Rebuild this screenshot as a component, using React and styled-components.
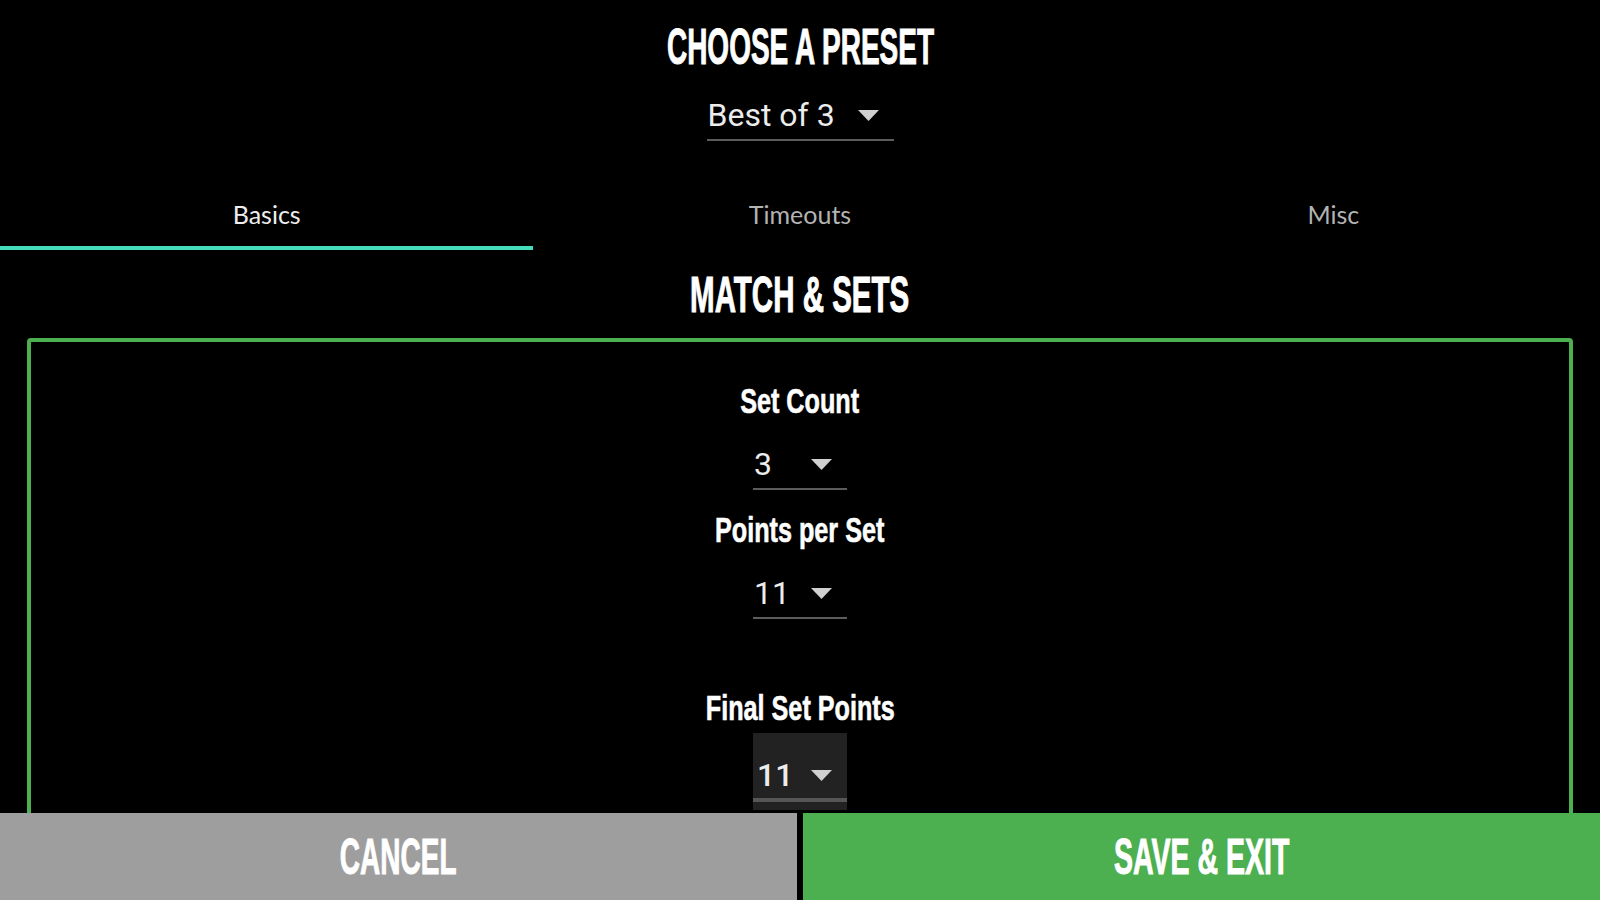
import React, { useState } from "react";
import styled, { createGlobalStyle } from "styled-components";

const GlobalStyle = createGlobalStyle`
  html, body {
    margin: 0;
    padding: 0;
    background: #000;
    overflow: hidden;
  }
  body {
    font-family: Roboto, "Liberation Sans", sans-serif;
    color: #fff;
  }
`;

const Page = styled.div`
  min-height: 100vh;
  box-sizing: border-box;
  padding-top: 22px;
  display: flex;
  flex-direction: column;
`;

// the app's display face is a narrow poster font, squeeze a bold sans to get there
const Squeeze = styled.span`
  display: inline-block;
  white-space: nowrap;
  transform: scaleX(${(p) => p.$x});
`;

const Heading = styled.h1`
  margin: ${(p) => p.$top || 0}px 0 0;
  font: 700 50px/50px "Liberation Sans", Arial, sans-serif;
  text-align: center;
  color: #fff;
  -webkit-text-stroke: 1px #fff;
`;

const Centered = styled.div`
  display: flex;
  justify-content: center;
  margin-top: ${(p) => p.$top || 0}px;
`;

const SelectBox = styled.div`
  display: flex;
  align-items: center;
  justify-content: space-between;
  box-sizing: border-box;
  width: ${(p) => p.$width}px;
  margin-top: ${(p) => (p.$filled ? "-15px" : "0")};
  padding: ${(p) => (p.$filled ? "23px 0 16px 4px" : "4px 0 5px 1px")};
  font: ${(p) => (p.$filled ? 500 : 400)} 32px/38px Roboto, sans-serif;
  color: #ececec;
  cursor: pointer;
  background: ${(p) =>
    p.$filled
      ? "linear-gradient(#555, #555) 0 calc(100% - 8px) / 100% 4px no-repeat, #222"
      : "none"};
  border-bottom: ${(p) => (p.$filled ? "none" : "2px solid #5c5c5c")};
`;

const Caret = styled.svg`
  width: 21px;
  height: 11px;
  margin-right: 15px;
  flex-shrink: 0;
`;

const Tabs = styled.div`
  display: grid;
  grid-template-columns: repeat(3, 1fr);
  margin-top: 37px;
`;

const Tab = styled.button`
  height: 72px;
  box-sizing: border-box;
  padding: 4px 0 0;
  border: none;
  border-bottom: 4px solid ${(p) => (p.$active ? "#45dcbc" : "transparent")};
  background: none;
  font: 400 25px Lato, "Open Sans", sans-serif;
  color: ${(p) => (p.$active ? "#eeeeee" : "#b3b3b3")};
  cursor: pointer;
`;

const Panel = styled.div`
  margin: 18px 27px 0;
  border: 4px solid #4caf50;
  border-radius: 4px;
  padding: 39px 0 140px;
  display: flex;
  flex-direction: column;
  align-items: center;
`;

const Field = styled.div`
  display: flex;
  flex-direction: column;
  align-items: center;
  gap: 20px;
  margin-top: ${(p) => p.$top || 0}px;
`;

const Label = styled.div`
  font: 700 35px/40px "Liberation Sans", Arial, sans-serif;
  color: #fff;
  -webkit-text-stroke: 0.6px #fff;
  text-align: center;
`;

const Footer = styled.div`
  position: fixed;
  left: 0;
  right: 0;
  bottom: 0;
  height: 87px;
  display: grid;
  grid-template-columns: 1fr 1fr;
  gap: 6px;
  background: #000;
`;

const ActionButton = styled.button`
  border: none;
  background: ${(p) => p.$bg};
  display: flex;
  align-items: center;
  justify-content: center;
  padding: 0;
  font: 700 50px/50px "Liberation Sans", Arial, sans-serif;
  color: #fff;
  -webkit-text-stroke: 1px #fff;
  cursor: pointer;
`;

function Select({ value, width, filled }) {
  return (
    <SelectBox $width={width} $filled={filled}>
      <span>{value}</span>
      <Caret viewBox="7 10 10 5" preserveAspectRatio="none">
        <path d="M7 10l5 5 5-5z" fill="#d0d0d0" />
      </Caret>
    </SelectBox>
  );
}

const tabs = ["Basics", "Timeouts", "Misc"];

export default function App() {
  const [tab, setTab] = useState(0);

  return (
    <Page>
      <GlobalStyle />
      <Heading>
        <Squeeze $x={0.56}>CHOOSE A PRESET</Squeeze>
      </Heading>
      <Centered $top={20}>
        <Select value="Best of 3" width={187} />
      </Centered>

      <Tabs>
        {tabs.map((name, i) => (
          <Tab key={name} $active={tab === i} onClick={() => setTab(i)}>
            {name}
          </Tab>
        ))}
      </Tabs>

      <Heading $top={20}>
        <Squeeze $x={0.59}>MATCH &amp; SETS</Squeeze>
      </Heading>

      <Panel>
        <Field>
          <Label>
            <Squeeze $x={0.72}>Set Count</Squeeze>
          </Label>
          <Select value="3" width={94} />
        </Field>
        <Field $top={20}>
          <Label>
            <Squeeze $x={0.72}>Points per Set</Squeeze>
          </Label>
          <Select value="11" width={94} />
        </Field>
        <Field $top={69}>
          <Label>
            <Squeeze $x={0.72}>Final Set Points</Squeeze>
          </Label>
          <Select value="11" width={94} filled />
        </Field>
      </Panel>

      <Footer>
        <ActionButton $bg="#9e9e9e">
          <Squeeze $x={0.56}>CANCEL</Squeeze>
        </ActionButton>
        <ActionButton $bg="#4caf50">
          <Squeeze $x={0.57}>SAVE &amp; EXIT</Squeeze>
        </ActionButton>
      </Footer>
    </Page>
  );
}
